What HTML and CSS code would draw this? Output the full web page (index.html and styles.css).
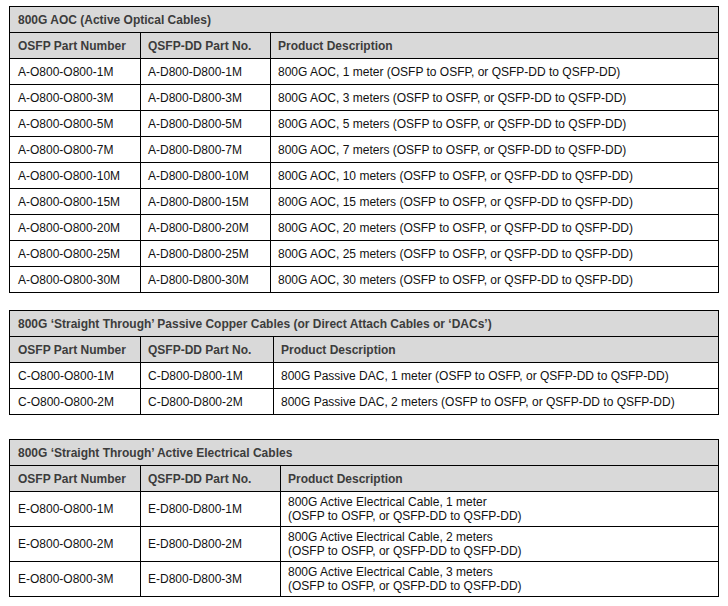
FILE: index.html
```html
<!DOCTYPE html>
<html>
<head>
<meta charset="utf-8">
<link rel="stylesheet" href="styles.css">
</head>
<body>
<div class="page">
  <table class="spec t1">
    <colgroup><col class="c1"><col class="c2"><col></colgroup>
    <tr class="title"><td colspan="3">800G AOC (Active Optical Cables)</td></tr>
    <tr class="head"><td>OSFP Part Number</td><td>QSFP-DD Part No.</td><td>Product Description</td></tr>
    <tr><td>A-O800-O800-1M</td><td>A-D800-D800-1M</td><td>800G AOC, 1 meter (OSFP to OSFP, or QSFP-DD to QSFP-DD)</td></tr>
    <tr><td>A-O800-O800-3M</td><td>A-D800-D800-3M</td><td>800G AOC, 3 meters (OSFP to OSFP, or QSFP-DD to QSFP-DD)</td></tr>
    <tr><td>A-O800-O800-5M</td><td>A-D800-D800-5M</td><td>800G AOC, 5 meters (OSFP to OSFP, or QSFP-DD to QSFP-DD)</td></tr>
    <tr><td>A-O800-O800-7M</td><td>A-D800-D800-7M</td><td>800G AOC, 7 meters (OSFP to OSFP, or QSFP-DD to QSFP-DD)</td></tr>
    <tr><td>A-O800-O800-10M</td><td>A-D800-D800-10M</td><td>800G AOC, 10 meters (OSFP to OSFP, or QSFP-DD to QSFP-DD)</td></tr>
    <tr><td>A-O800-O800-15M</td><td>A-D800-D800-15M</td><td>800G AOC, 15 meters (OSFP to OSFP, or QSFP-DD to QSFP-DD)</td></tr>
    <tr><td>A-O800-O800-20M</td><td>A-D800-D800-20M</td><td>800G AOC, 20 meters (OSFP to OSFP, or QSFP-DD to QSFP-DD)</td></tr>
    <tr><td>A-O800-O800-25M</td><td>A-D800-D800-25M</td><td>800G AOC, 25 meters (OSFP to OSFP, or QSFP-DD to QSFP-DD)</td></tr>
    <tr><td>A-O800-O800-30M</td><td>A-D800-D800-30M</td><td>800G AOC, 30 meters (OSFP to OSFP, or QSFP-DD to QSFP-DD)</td></tr>
  </table>

  <table class="spec t2">
    <colgroup><col class="c1"><col class="c2"><col></colgroup>
    <tr class="title"><td colspan="3">800G ‘Straight Through’ Passive Copper Cables (or Direct Attach Cables or ‘DACs’)</td></tr>
    <tr class="head"><td>OSFP Part Number</td><td>QSFP-DD Part No.</td><td>Product Description</td></tr>
    <tr><td>C-O800-O800-1M</td><td>C-D800-D800-1M</td><td>800G Passive DAC, 1 meter (OSFP to OSFP, or QSFP-DD to QSFP-DD)</td></tr>
    <tr><td>C-O800-O800-2M</td><td>C-D800-D800-2M</td><td>800G Passive DAC, 2 meters (OSFP to OSFP, or QSFP-DD to QSFP-DD)</td></tr>
  </table>

  <table class="spec t3">
    <colgroup><col class="c1"><col class="c2"><col></colgroup>
    <tr class="title"><td colspan="3">800G ‘Straight Through’ Active Electrical Cables</td></tr>
    <tr class="head"><td>OSFP Part Number</td><td>QSFP-DD Part No.</td><td>Product Description</td></tr>
    <tr class="tall"><td>E-O800-O800-1M</td><td>E-D800-D800-1M</td><td>800G Active Electrical Cable, 1 meter<br>(OSFP to OSFP, or QSFP-DD to QSFP-DD)</td></tr>
    <tr class="tall"><td>E-O800-O800-2M</td><td>E-D800-D800-2M</td><td>800G Active Electrical Cable, 2 meters<br>(OSFP to OSFP, or QSFP-DD to QSFP-DD)</td></tr>
    <tr class="tall"><td>E-O800-O800-3M</td><td>E-D800-D800-3M</td><td>800G Active Electrical Cable, 3 meters<br>(OSFP to OSFP, or QSFP-DD to QSFP-DD)</td></tr>
  </table>
</div>
</body>
</html>
```

FILE: styles.css
```css
html, body {
  margin: 0;
  padding: 0;
  background: #ffffff;
}
.page {
  padding: 6px 0 0 9px;
  font-family: "Liberation Sans", Arial, sans-serif;
  font-size: 12px;
  color: #111111;
}
.spec {
  width: 710px;
  border-collapse: collapse;
  table-layout: fixed;
  border: 1px solid #000;
}
.spec td {
  border: 1px solid #000;
  padding: 0 8px;
  height: 25px;
  line-height: 14px;
  vertical-align: middle;
  white-space: nowrap;
}
.spec td + td {
  padding-left: 7px;
}
.spec .c1 { width: 131px; }
.t1 .c2 { width: 130px; }
.t2 .c2 { width: 133px; }
.t3 .c2 { width: 140px; }
.spec .title td,
.spec .head td {
  background: #d9d9d9;
  font-weight: bold;
  color: #3c3c3c;
}
.spec .tall td {
  height: 34px;
}
.t2 { margin-top: 17px; }
.t3 { margin-top: 24px; }
```
